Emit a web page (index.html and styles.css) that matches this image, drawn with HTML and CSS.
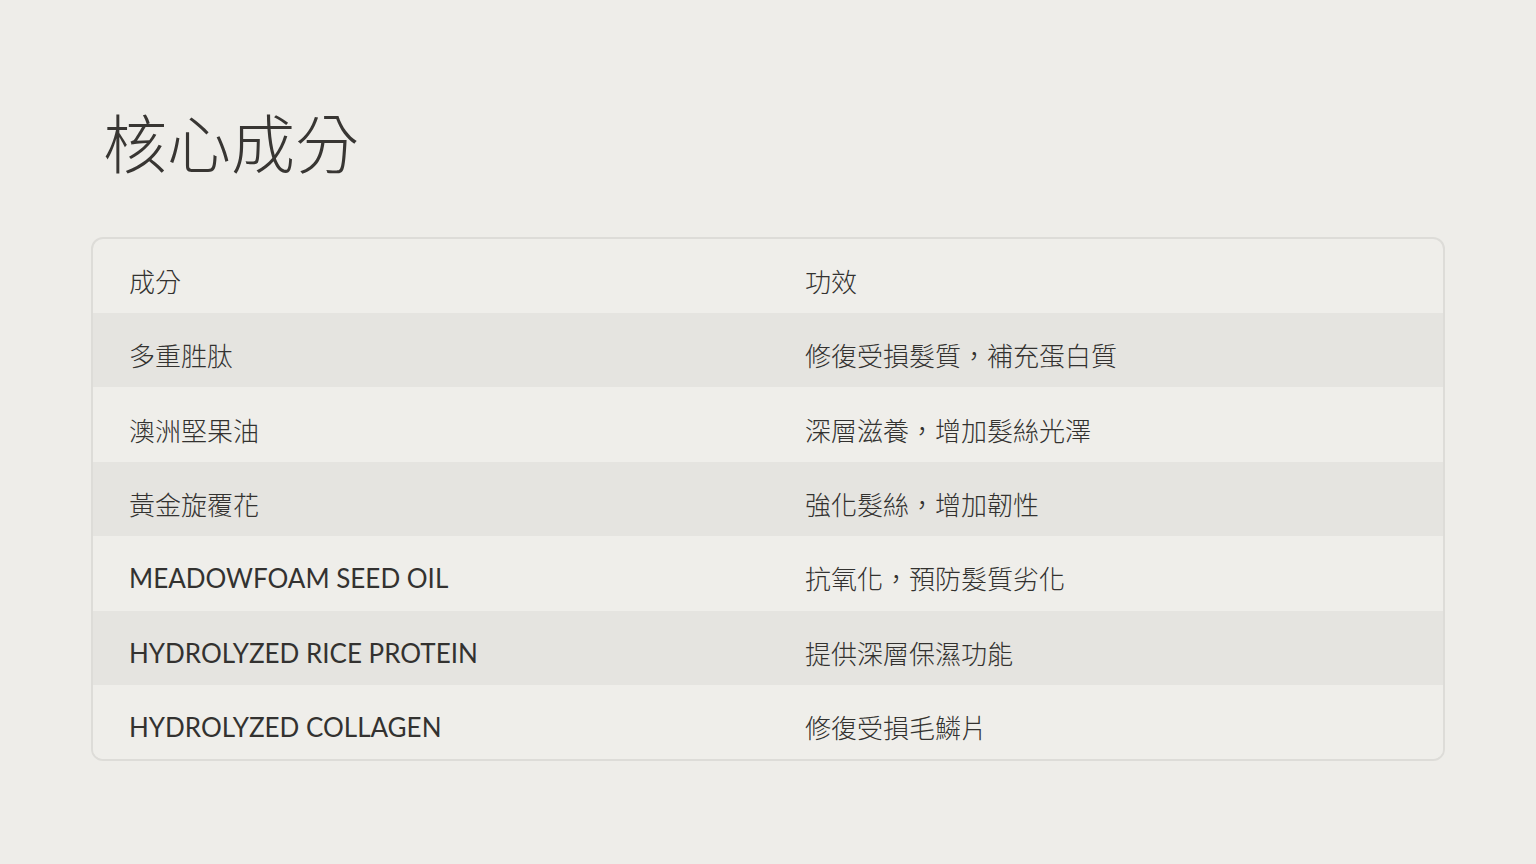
FILE: index.html
```html
<!DOCTYPE html>
<html lang="zh-Hant-TW">
<head>
<meta charset="utf-8">
<title>核心成分</title>
<link rel="stylesheet" href="styles.css">
</head>
<body>
<main class="page">
  <h1 class="title">核心成分</h1>
  <div class="table-card">
    <table class="ing-table">
      <thead>
        <tr><th>成分</th><th>功效</th></tr>
      </thead>
      <tbody>
        <tr><td>多重胜肽</td><td>修復受損髮質，補充蛋白質</td></tr>
        <tr><td>澳洲堅果油</td><td>深層滋養，增加髮絲光澤</td></tr>
        <tr><td>黃金旋覆花</td><td>強化髮絲，增加韌性</td></tr>
        <tr><td class="latin">MEADOWFOAM SEED OIL</td><td>抗氧化，預防髮質劣化</td></tr>
        <tr><td class="latin">HYDROLYZED RICE PROTEIN</td><td>提供深層保濕功能</td></tr>
        <tr><td class="latin">HYDROLYZED COLLAGEN</td><td>修復受損毛鱗片</td></tr>
      </tbody>
    </table>
  </div>
</main>
</body>
</html>
```

FILE: styles.css
```css
html, body {
  margin: 0;
  padding: 0;
}
body {
  background: #eeede9;
  font-family: Lato, "Noto Sans CJK TC", sans-serif;
  color: #333230;
  width: 1536px;
  height: 864px;
  overflow: hidden;
}
.page {
  padding: 97px 91px 0 91px;
}
.title {
  margin: 0 0 0 12px;
  font-family: "Noto Sans CJK TC", sans-serif;
  font-size: 64px;
  font-weight: 300;
  line-height: 86px;
  color: #383633;
}
.table-card {
  margin-top: 54px;
  border: 2px solid #dddcd8;
  border-radius: 12px;
  overflow: hidden;
  background: #efeeea;
}
.ing-table {
  width: 100%;
  border-collapse: collapse;
  table-layout: fixed;
}
.ing-table th,
.ing-table td {
  box-sizing: border-box;
  text-align: left;
  font-size: 26px;
  line-height: 28px;
  padding: 10px 36px 0 36px;
  font-weight: 300;
  color: #333230;
  font-family: "Noto Sans CJK TC", sans-serif;
}
.ing-table th:nth-child(2),
.ing-table td:nth-child(2) {
  padding-left: 37px;
}
.ing-table th {
  height: 74px;
}
.ing-table td {
  height: 74.4px;
}
.ing-table td.latin {
  font-family: Lato, sans-serif;
  font-weight: 400;
}
.ing-table tbody tr:nth-child(odd) {
  background: #e5e4e0;
}
.ing-table tbody tr:nth-child(even) {
  background: #efeeea;
}
```
